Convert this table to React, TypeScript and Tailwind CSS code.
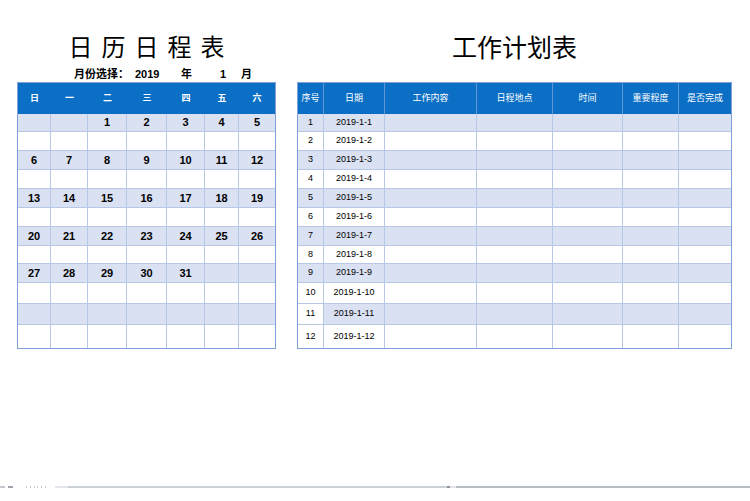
import React from "react";

const font = { fontFamily: '"Liberation Sans", "Noto Sans CJK SC", sans-serif' };

const rowH = [
  "h-[18px]",
  "h-[19px]",
  "h-[19px]",
  "h-[19px]",
  "h-[19px]",
  "h-[19px]",
  "h-[19px]",
  "h-[18px]",
  "h-[19px]",
  "h-[21px]",
  "h-[21px]",
  "h-[23px]",
];

const calW = ["w-[33px]", "w-[37px]", "w-[39px]", "w-[40px]", "w-[38px]", "w-[34px]", "w-[36px]"];
const planW = ["w-[26px]", "w-[61px]", "w-[92px]", "w-[76px]", "w-[70px]", "w-[56px]", "w-[52px]"];

const calHead = ["日", "一", "二", "三", "四", "五", "六"];
const planHead = ["序号", "日期", "工作内容", "日程地点", "时间", "重要程度", "是否完成"];

const E = ["", "", "", "", "", "", ""];
const calRows: string[][] = [
  ["", "", "1", "2", "3", "4", "5"],
  E,
  ["6", "7", "8", "9", "10", "11", "12"],
  E,
  ["13", "14", "15", "16", "17", "18", "19"],
  E,
  ["20", "21", "22", "23", "24", "25", "26"],
  E,
  ["27", "28", "29", "30", "31", "", ""],
  E,
  E,
  E,
];

function Calendar() {
  return (
    <div className="border border-[#7f9fd6] w-[259px]">
      <div className="flex h-[31px] bg-[#0b6fc5]">
        {calHead.map((h, i) => (
          <div key={i} className={`${calW[i]} flex items-center justify-center text-white text-[9px] font-bold`}>
            {h}
          </div>
        ))}
      </div>
      {calRows.map((r, ri) => (
        <div key={ri} className={`flex ${rowH[ri]} ${ri % 2 === 0 ? "bg-[#dae1f3]" : "bg-white"}`}>
          {r.map((c, ci) => (
            <div
              key={ci}
              className={`${calW[ci]} h-full flex items-center justify-center text-[11px] font-bold text-black border-[#b7c7e6] ${ci < 6 ? "border-r" : ""} ${ri < 11 ? "border-b" : ""}`}
            >
              {c}
            </div>
          ))}
        </div>
      ))}
    </div>
  );
}

function Plan() {
  return (
    <div className="border border-[#7f9fd6] w-[435px]">
      <div className="flex h-[31px] bg-[#0b6fc5]">
        {planHead.map((h, i) => (
          <div
            key={i}
            className={`${planW[i]} h-full flex items-center justify-center text-white text-[9px] border-[#5d97d6] ${i < 6 ? "border-r" : ""}`}
          >
            {h}
          </div>
        ))}
      </div>
      {rowH.map((hc, ri) => {
        const light = ri % 2 === 0;
        return (
          <div key={ri} className={`flex ${hc} ${light ? "bg-[#dae1f3]" : "bg-white"}`}>
            {planW.map((w, ci) => (
              <div
                key={ci}
                className={`${w} h-full flex items-center justify-center text-[9px] text-black border-[#b7c7e6] ${ci < 6 ? "border-r" : ""} ${ri < 11 ? "border-b" : ""} ${ri === 10 && ci === 0 ? "bg-white" : ""}`}
              >
                {ci === 0 ? String(ri + 1) : ci === 1 ? `2019-1-${ri + 1}` : ""}
              </div>
            ))}
          </div>
        );
      })}
    </div>
  );
}

export default function App() {
  return (
    <div className="w-[750px] h-[501px] bg-white flex flex-col overflow-hidden" style={font}>
      <div className="flex pl-[17px] pt-[33px] gap-[21px]">
        <div className="w-[259px] flex flex-col">
          <div
            className="h-[26px] leading-[26px] text-[24px] tracking-[9px] text-center pl-[9px] text-black"
            style={{ fontFamily: '"Noto Sans CJK SC", sans-serif' }}
          >
            日历日程表
          </div>
          <div className="h-[23px] pt-[9px] flex text-[11px] leading-[12px] font-bold text-black pl-[57px]">
            <span className="w-[61px]">月份选择：</span>
            <span className="w-[46px]">2019</span>
            <span className="w-[39px]">年</span>
            <span className="w-[21px]">1</span>
            <span>月</span>
          </div>
          <Calendar />
        </div>
        <div className="w-[435px] flex flex-col">
          <div
            className="h-[26px] leading-[26px] text-[25px] text-center text-black"
            style={{ fontFamily: '"Noto Sans CJK SC", sans-serif' }}
          >
            工作计划表
          </div>
          <div className="h-[23px]" />
          <Plan />
        </div>
      </div>
      <div className="mt-auto mb-[13px] h-[2px] flex items-stretch">
        <div className="w-[5px] bg-[#c4c8cf]" />
        <div className="w-[3px]" />
        <div className="w-[5px] bg-[#9ea3ab]" />
        <div className="w-[13px]" />
        <div className="w-[20px] flex gap-[3px]">
          <div className="w-px bg-[#c8ccd2]" />
          <div className="w-px bg-[#c8ccd2]" />
          <div className="w-px bg-[#c8ccd2]" />
          <div className="w-px bg-[#c8ccd2]" />
          <div className="w-px bg-[#c8ccd2]" />
          <div className="w-px bg-[#c8ccd2]" />
        </div>
        <div className="w-[9px]" />
        <div className="w-[13px] bg-[#e2e5e9]" />
        <div className="w-[379px] bg-[#ccd0d7]" />
        <div className="w-[3px] bg-[#8e939b]" />
        <div className="w-[6px] bg-[#e2e5e9]" />
        <div className="flex-1 bg-[#b9bdc4]" />
      </div>
    </div>
  );
}
